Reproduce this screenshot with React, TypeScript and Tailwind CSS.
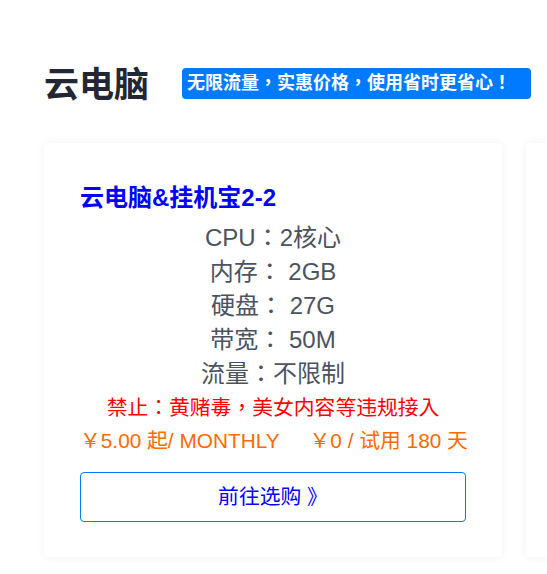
import React from "react";

const font = { fontFamily: '"Liberation Sans", "Noto Sans CJK TC", sans-serif' };

export default function App() {
  return (
    <div className="w-[547px] h-[574px] overflow-hidden bg-white" style={font}>
      <div className="pl-[44px] pt-[64px]">
        <div className="flex items-start">
          <h2 className="text-[35px] leading-[42px] font-bold text-[#232734] whitespace-nowrap">云电脑</h2>
          <div className="ml-[33px] mt-[4px] h-[31px] w-[349px] shrink-0 rounded-[4px] bg-[#007bff] pl-[5px] text-[18px] leading-[31px] font-bold text-white whitespace-nowrap">
            无限流量，实惠价格，使用省时更省心！
          </div>
        </div>
        <div className="mt-[37px] flex gap-[24px]">
          <div className="w-[458px] shrink-0 rounded-[4px] bg-white pt-[37px] pb-[35px] px-[36px] shadow-[0_0_10px_rgba(0,0,0,0.06)]">
            <div className="text-[24px] leading-[36px] font-bold text-[#0000ff] whitespace-nowrap">云电脑&amp;挂机宝2-2</div>
            <div className="mt-[5px] text-center text-[24px] leading-[34px] text-[#4b5260]">
              <div>CPU：2核心</div>
              <div>内存： 2GB</div>
              <div>硬盘： 27G</div>
              <div>带宽： 50M</div>
              <div>流量：不限制</div>
            </div>
            <div className="text-center text-[20.8px] leading-[33px] text-[#ff0000] whitespace-nowrap">禁止：黄赌毒，美女内容等违规接入</div>
            <div className="text-center text-[20.8px] leading-[33px] text-[#ff6a00] whitespace-nowrap">
              <span>￥5.00 起/ MONTHLY</span>
              <span className="ml-[30px]">￥0 / 试用 180 天</span>
            </div>
            <button className="mt-[15px] flex h-[50px] w-full items-center justify-center rounded-[4px] border border-[#007bff] bg-white text-[20.8px] text-[#0000ff]">
              前往选购 》
            </button>
          </div>
          <div className="w-[458px] h-[414px] shrink-0 rounded-[4px] bg-white shadow-[0_0_10px_rgba(0,0,0,0.06)]"></div>
        </div>
      </div>
    </div>
  );
}
